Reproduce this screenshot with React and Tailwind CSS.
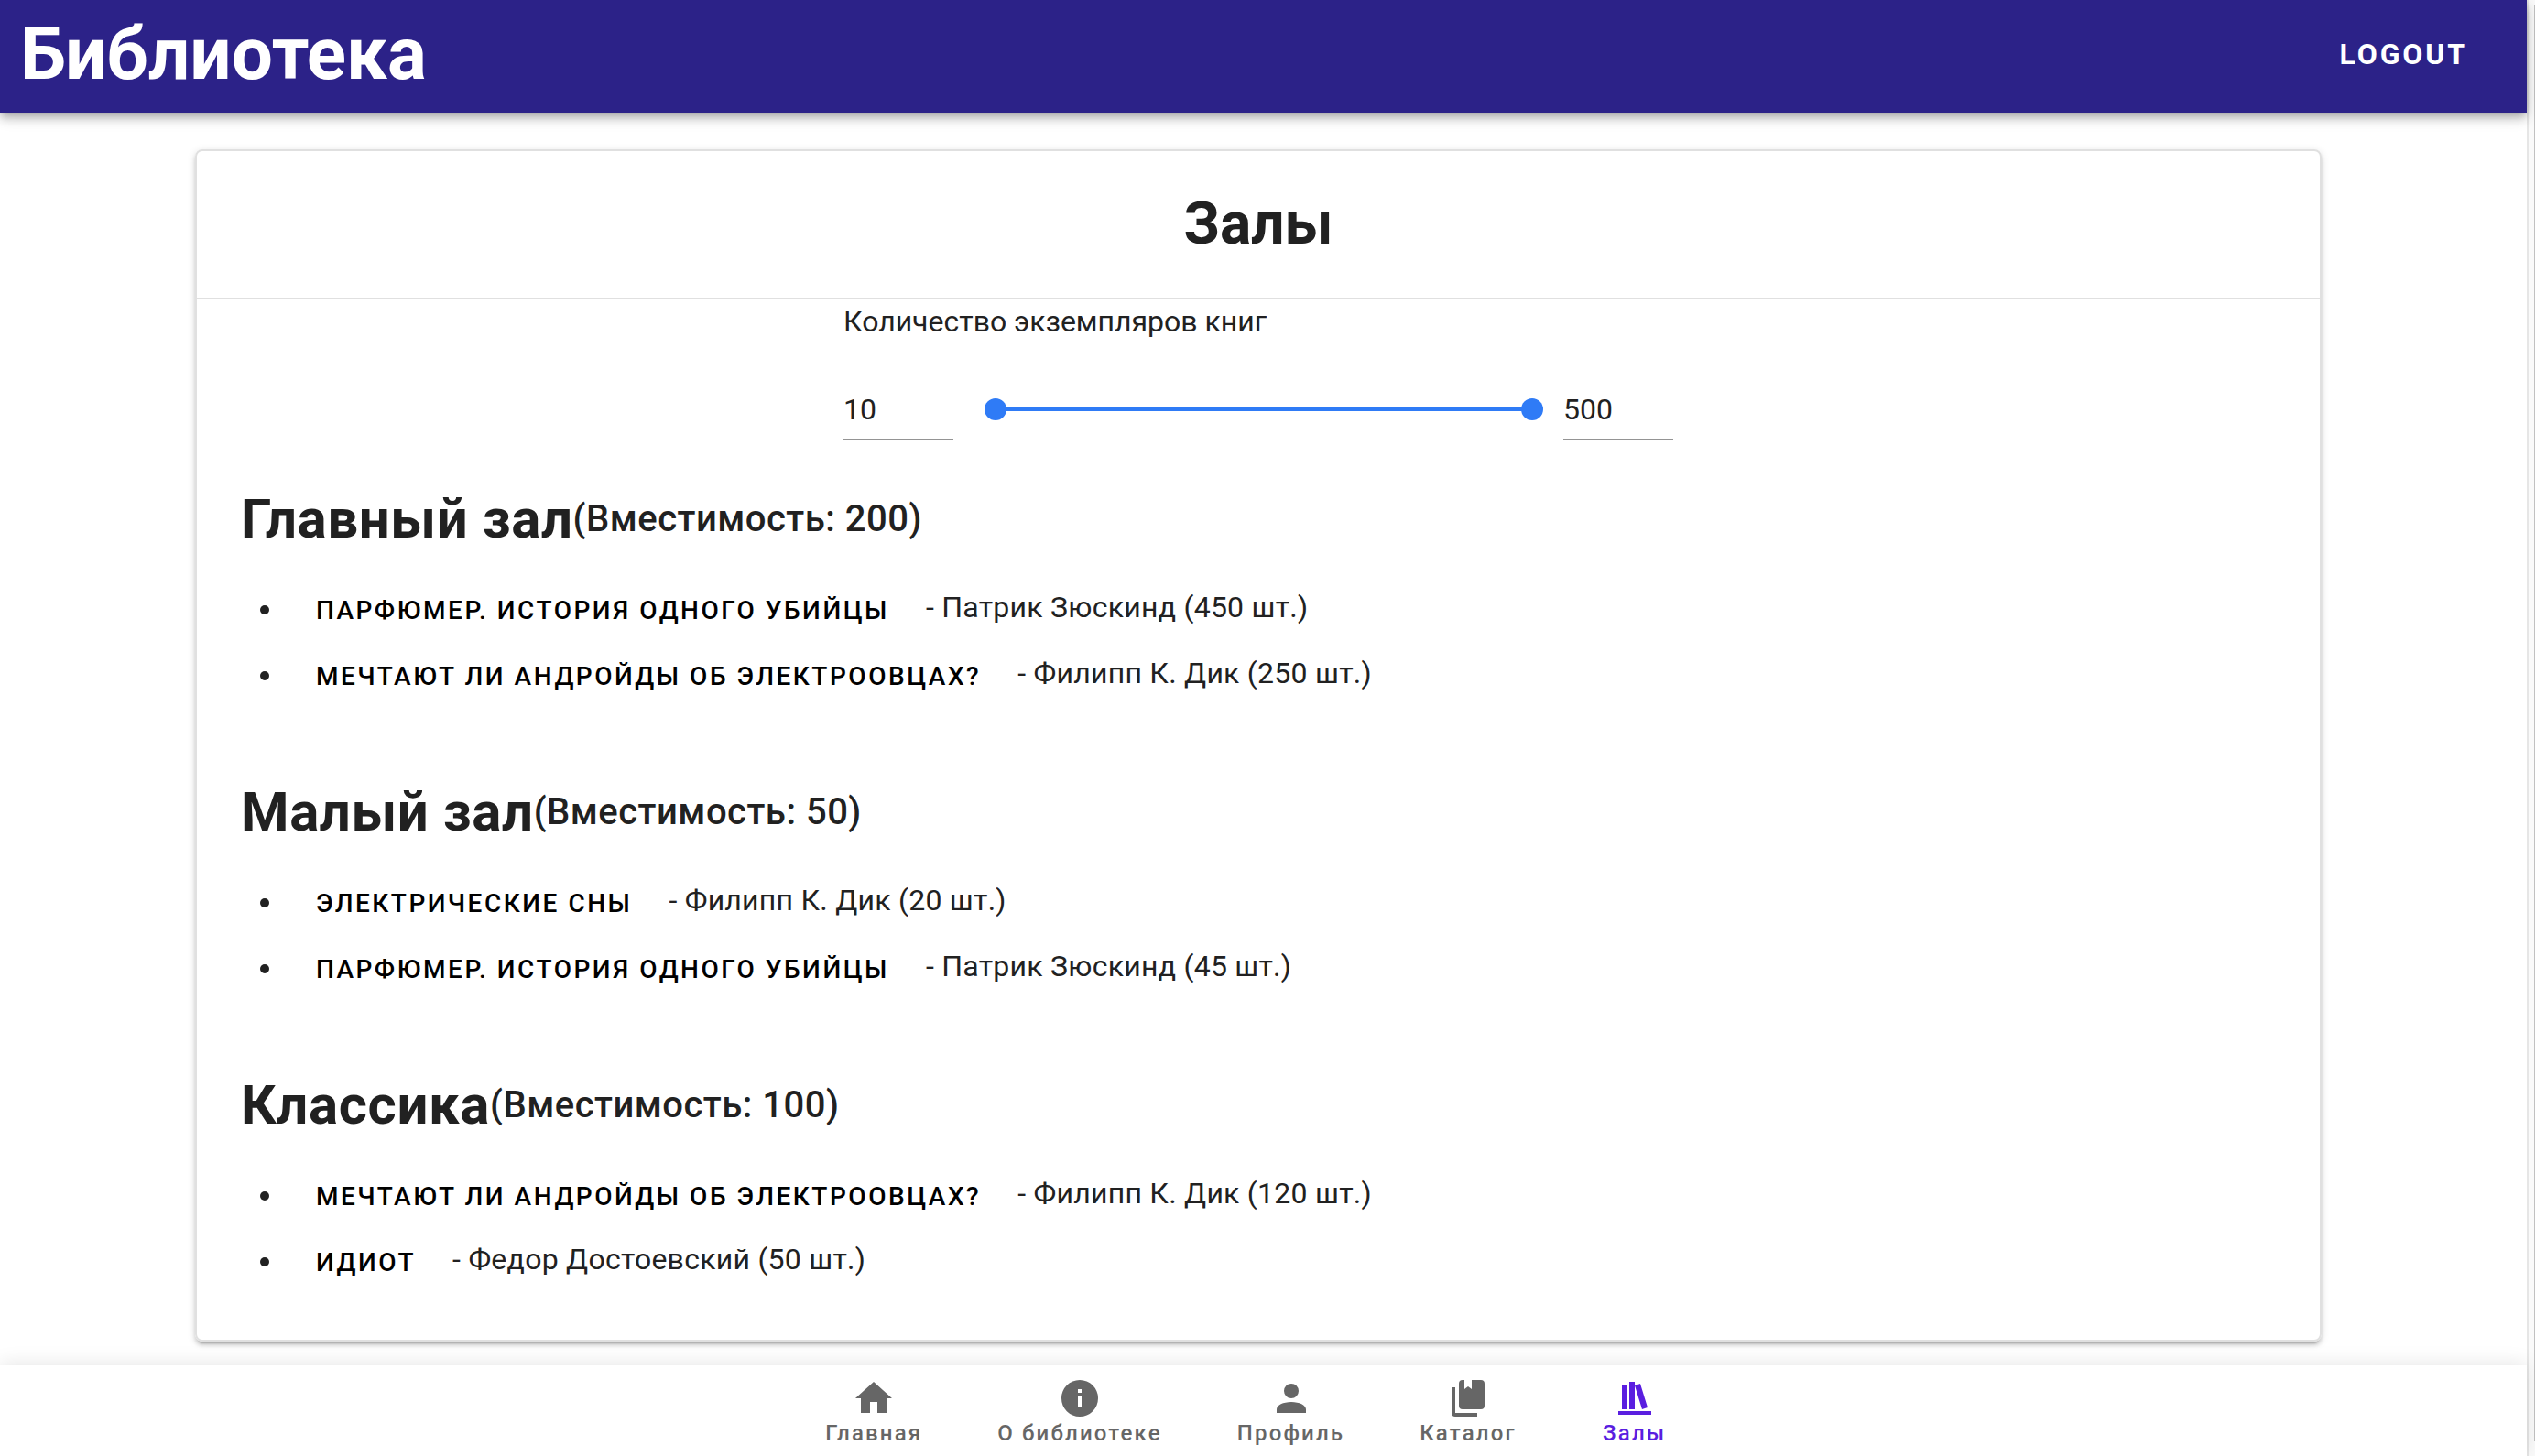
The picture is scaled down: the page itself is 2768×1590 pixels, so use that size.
import { useState } from "react";

const halls = [
  {
    name: "Главный зал",
    capacity: 200,
    books: [
      { title: "Парфюмер. История одного убийцы", author: "Патрик Зюскинд", count: 450 },
      { title: "Мечтают ли андройды об электроовцах?", author: "Филипп К. Дик", count: 250 },
    ],
  },
  {
    name: "Малый зал",
    capacity: 50,
    books: [
      { title: "Электрические сны", author: "Филипп К. Дик", count: 20 },
      { title: "Парфюмер. История одного убийцы", author: "Патрик Зюскинд", count: 45 },
    ],
  },
  {
    name: "Классика",
    capacity: 100,
    books: [
      { title: "Мечтают ли андройды об электроовцах?", author: "Филипп К. Дик", count: 120 },
      { title: "Идиот", author: "Федор Достоевский", count: 50 },
    ],
  },
];

const tabs = [
  { label: "Главная", path: "M10,20V14H14V20H19V12H22L12,3L2,12H5V20H10Z" },
  {
    label: "О библиотеке",
    path: "M13,9H11V7H13M13,17H11V11H13M12,2A10,10 0 0,0 2,12A10,10 0 0,0 12,22A10,10 0 0,0 22,12A10,10 0 0,0 12,2Z",
  },
  {
    label: "Профиль",
    path: "M12,4A4,4 0 0,1 16,8A4,4 0 0,1 12,12A4,4 0 0,1 8,8A4,4 0 0,1 12,4M12,14C16.42,14 20,15.79 20,18V20H4V18C4,15.79 7.58,14 12,14Z",
  },
  {
    label: "Каталог",
    path: "M19 2A2 2 0 0 1 21 4V16A2 2 0 0 1 19 18H9A2 2 0 0 1 7 16V4A2 2 0 0 1 9 2H10V7L12 5.5L14 7V2H19M17 20V22H5A2 2 0 0 1 3 20V6H5V20H17Z",
  },
  {
    label: "Залы",
    active: true,
    path: "M9 3V18H12V3H9M12 5L16 18L19 17L15 4L12 5M5 5V18H8V5H5M3 19V21H21V19H3Z",
  },
];

const rangeClass =
  "pointer-events-none absolute inset-0 m-0 h-6 w-full appearance-none bg-transparent outline-none [&::-webkit-slider-thumb]:pointer-events-auto [&::-webkit-slider-thumb]:size-6 [&::-webkit-slider-thumb]:cursor-pointer [&::-webkit-slider-thumb]:appearance-none [&::-webkit-slider-thumb]:rounded-full [&::-webkit-slider-thumb]:bg-[#2f7bf6]";

const numberClass =
  "h-[66px] w-[120px] border-b-2 border-[#949494] bg-transparent text-[32px] leading-[48px] outline-none";

function CopiesFilter() {
  const [low, setLow] = useState(10);
  const [high, setHigh] = useState(500);
  const percent = (value) => ((value - 10) / 490) * 100;
  return (
    <fieldset className="mx-auto w-[906px]">
      <legend className="text-[32px] leading-[48px]">Количество экземпляров книг</legend>
      <div className="mt-10 flex items-center">
        <input
          aria-label="Минимум"
          inputMode="numeric"
          className={numberClass}
          value={low}
          onChange={(e) => setLow(Number(e.target.value) || 0)}
        />
        <div className="relative mr-[22px] mb-0.5 ml-[34px] flex h-6 flex-1 items-center px-3">
          <div className="h-1 flex-1 bg-[#d5e4fd]">
            <div
              className="h-full bg-[#2f7bf6]"
              style={{ marginLeft: `${percent(low)}%`, width: `${percent(high) - percent(low)}%` }}
            />
          </div>
          <input
            type="range"
            aria-label="Минимум экземпляров"
            min="10"
            max="500"
            value={low}
            onChange={(e) => setLow(Math.min(Number(e.target.value), high))}
            className={rangeClass}
          />
          <input
            type="range"
            aria-label="Максимум экземпляров"
            min="10"
            max="500"
            value={high}
            onChange={(e) => setHigh(Math.max(Number(e.target.value), low))}
            className={rangeClass}
          />
        </div>
        <input
          aria-label="Максимум"
          inputMode="numeric"
          className={numberClass}
          value={high}
          onChange={(e) => setHigh(Number(e.target.value) || 0)}
        />
      </div>
    </fieldset>
  );
}

function Hall({ hall }) {
  return (
    <section>
      <h2 className="flex items-center text-[60px] leading-[80px] font-bold tracking-[0.01em]">
        {hall.name}
        <span className="text-[40px] font-medium tracking-[0.0125em]">(Вместимость: {hall.capacity})</span>
      </h2>
      <ul className="mt-5 list-disc pl-12 text-[32px] leading-[72px] tracking-[0.008em]">
        {hall.books.map((book) => (
          <li key={book.title}>
            <div className="flex h-[72px] items-center gap-2">
              <button
                type="button"
                className="h-[72px] pt-2 pr-8 pl-[34px] text-[28px] leading-[64px] font-medium tracking-[0.09em] text-black uppercase"
              >
                {book.title}
              </button>
              <span>
                - {book.author} ({book.count} шт.)
              </span>
            </div>
          </li>
        ))}
      </ul>
    </section>
  );
}

export default function App() {
  return (
    <div className="flex h-screen bg-white font-['Roboto',sans-serif] text-[#212121]">
      <div className="flex min-w-0 flex-1 flex-col">
        <header className="z-10 flex h-[123px] shrink-0 items-center justify-between bg-[#2c2288] pr-8 pb-1.5 pl-[22px] text-white shadow-[0_4px_8px_-2px_rgba(0,0,0,0.2),0_8px_10px_rgba(0,0,0,0.14),0_2px_20px_rgba(0,0,0,0.12)]">
          <h1 className="text-[80px] leading-[96px] font-bold">Библиотека</h1>
          <button type="button" className="h-[72px] px-8 text-[32px] font-bold tracking-[0.09em] uppercase">
            Logout
          </button>
        </header>

        <main className="min-h-0 flex-1 pt-10 pr-[224px] pl-[213px]">
          <article className="rounded-lg border-2 border-[#e0e0e0] pb-[52px] shadow-[0_6px_2px_-4px_rgba(0,0,0,0.2),0_4px_4px_rgba(0,0,0,0.14),0_2px_10px_rgba(0,0,0,0.12)]">
            <div className="flex h-[162px] items-center justify-center border-b-2 border-[#e0e0e0]">
              <h2 className="text-[64px] leading-[80px] font-bold">Залы</h2>
            </div>
            <CopiesFilter />
            <div className="mt-[46px] flex flex-col gap-[76px] px-12">
              {halls.map((hall) => (
                <Hall key={hall.name} hall={hall} />
              ))}
            </div>
          </article>
        </main>

        <nav className="z-10 flex h-[99px] shrink-0 justify-center bg-white pr-[26px] shadow-[0_-2px_20px_rgba(0,0,0,0.1)]">
          {tabs.map((tab) => (
            <a
              key={tab.label}
              href="#"
              aria-current={tab.active ? "page" : undefined}
              className={`flex min-w-[176px] flex-col items-center px-[41px] pt-3 text-[24px] leading-[28px] font-medium tracking-[0.09em] ${
                tab.active ? "text-[#5a1ee0]" : "text-[#666666]"
              }`}
            >
              <svg viewBox="0 0 24 24" className="size-12 fill-current" aria-hidden="true">
                <path d={tab.path} />
              </svg>
              {tab.label}
            </a>
          ))}
        </nav>
      </div>
      <div className="flex w-[9px] shrink-0 justify-end border-l-2 border-[#e6e6e6] bg-[#fafafa]" aria-hidden="true">
        <div className="mt-1.5 mb-4 w-px bg-[#c1c1c1]" />
      </div>
    </div>
  );
}
